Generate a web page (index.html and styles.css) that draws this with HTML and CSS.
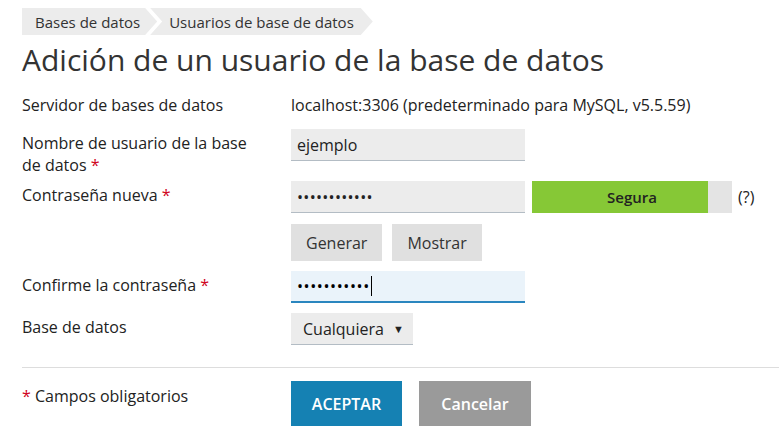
FILE: index.html
```html
<!DOCTYPE html>
<html lang="es">
<head>
  <meta charset="UTF-8">
  <title>Adición de un usuario de la base de datos</title>
  <link rel="stylesheet" href="styles.css">
</head>
<body>
  <div class="page">
    <div class="breadcrumbs">
      <a href="#" class="crumb first">Bases de datos</a>
      <a href="#" class="crumb">Usuarios de base de datos</a>
    </div>
    <h1>Adición de un usuario de la base de datos</h1>

    <div class="form">
      <div class="row row-static">
        <div class="label">Servidor de bases de datos</div>
        <div class="field">localhost:3306 (predeterminado para MySQL, v5.5.59)</div>
      </div>
      <div class="row row-tall">
        <div class="label">Nombre de usuario de la base de datos <span class="req">*</span></div>
        <div class="field"><input type="text" class="input" value="ejemplo"></div>
      </div>
      <div class="row">
        <div class="label">Contraseña nueva <span class="req">*</span></div>
        <div class="field">
          <div class="pass-line">
            <input type="password" class="input" value="ejemplo12345">
            <div class="meter">
              <div class="meter-bar" style="width: 88%"></div>
              <span class="meter-text">Segura</span>
            </div>
            <a href="#" class="hint">(?)</a>
          </div>
          <div class="pass-actions">
            <button class="btn-light">Generar</button>
            <button class="btn-light">Mostrar</button>
          </div>
        </div>
      </div>
      <div class="row">
        <div class="label">Confirme la contraseña <span class="req">*</span></div>
        <div class="field"><div class="input focused">•••••••••••<span class="caret"></span></div></div>
      </div>
      <div class="row">
        <div class="label">Base de datos</div>
        <div class="field"><div class="select">Cualquiera <span class="arrow">▼</span></div></div>
      </div>
    </div>

    <div class="footer">
      <div class="label"><span class="req">*</span> Campos obligatorios</div>
      <div class="buttons">
        <button class="btn-primary">ACEPTAR</button>
        <button class="btn-cancel">Cancelar</button>
      </div>
    </div>
  </div>
</body>
</html>
```

FILE: styles.css
```css
body {
  margin: 0;
  font-family: 'Open Sans', sans-serif;
  color: #222;
  background: #fff;
  font-size: 16px;
}
.page {
  padding: 8px 0 0 22px;
}
.breadcrumbs {
  display: flex;
  height: 27px;
}
.crumb {
  display: flex;
  align-items: center;
  background: #ececec;
  color: #333;
  text-decoration: none;
  font-size: 15px;
  margin-left: -7px;
  padding: 0 19px 0 19px;
  clip-path: polygon(0 0, calc(100% - 12px) 0, 100% 50%, calc(100% - 12px) 100%, 0 100%, 12px 50%);
}
.crumb.first {
  margin-left: 0;
  padding: 0 17px 0 13px;
  clip-path: polygon(0 0, calc(100% - 12px) 0, 100% 50%, calc(100% - 12px) 100%, 0 100%);
}
h1 {
  margin: 7px 0 16px;
  font-size: 30px;
  font-weight: 400;
  color: #333;
  line-height: 36px;
}
.row {
  display: flex;
  margin-bottom: 10px;
}
.row-static {
  margin-bottom: 13px;
}
.row-tall {
  margin-bottom: 5px;
}
.label {
  box-sizing: border-box;
  width: 269px;
  flex-shrink: 0;
  padding-right: 29px;
  line-height: 22px;
  padding-top: 3px;
}
.row-static .label {
  padding-top: 0;
}
.field {
  line-height: 22px;
}
.req {
  color: #d0021b;
}
.input {
  box-sizing: border-box;
  width: 234px;
  height: 32px;
  border: none;
  border-bottom: 1px solid #b3bcc4;
  background: #ececec;
  font-family: inherit;
  font-size: 16px;
  color: #222;
  padding: 0 6px;
  margin: 0;
  outline: none;
  display: flex;
  align-items: center;
}
input[type="password"] {
  letter-spacing: 0.3px;
}
.input.focused {
  background: #eaf3fa;
  border-bottom: 2px solid #2a86bf;
  color: #000;
  letter-spacing: 0.6px;
}
.caret {
  display: inline-block;
  width: 1px;
  height: 20px;
  background: #000;
  margin-left: 1px;
}
.pass-line {
  display: flex;
  align-items: center;
}
.meter {
  position: relative;
  width: 200px;
  height: 32px;
  background: #e4e4e4;
  margin-left: 7px;
}
.meter-bar {
  height: 100%;
  background: #86c836;
}
.meter-text {
  position: absolute;
  inset: 0;
  display: flex;
  align-items: center;
  justify-content: center;
  font-size: 15px;
  font-weight: 600;
  color: #222;
}
.hint {
  margin-left: 6px;
  color: #222;
  text-decoration: none;
  font-size: 16px;
}
.pass-actions {
  display: flex;
  gap: 10px;
  margin-top: 11px;
}
.btn-light {
  height: 37px;
  padding: 0 15px;
  border: none;
  background: #e0e0e0;
  font-family: inherit;
  font-size: 16px;
  color: #333;
}
.select {
  box-sizing: border-box;
  width: 122px;
  height: 32px;
  background: #ececec;
  border-bottom: 1px solid #b3bcc4;
  display: flex;
  align-items: center;
  padding: 0 9px 0 12px;
  justify-content: space-between;
}
.arrow {
  font-size: 11px;
}
.footer {
  display: flex;
  border-top: 1px solid #ddd;
  margin-top: 22px;
  padding-top: 13px;
}
.footer .label {
  padding-top: 4px;
}
.buttons {
  display: flex;
  gap: 17px;
}
.btn-primary,
.btn-cancel {
  height: 45px;
  border: none;
  font-family: inherit;
  font-size: 16px;
  font-weight: 600;
  color: #fff;
}
.btn-primary {
  width: 111px;
  background: #1581b3;
}
.btn-cancel {
  width: 112px;
  background: #9a9a9a;
}
```
